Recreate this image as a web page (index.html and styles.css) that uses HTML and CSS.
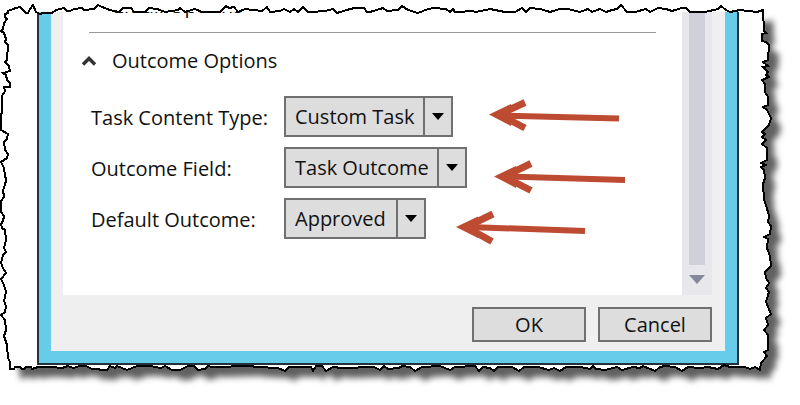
FILE: index.html
```
<!DOCTYPE html>
<html lang="en">
<head>
    <meta charset="UTF-8">
    <meta name="viewport" content="width=device-width, initial-scale=1.0">
    <title>Outcome Options</title>
    <link rel="stylesheet" href="styles.css">
</head>
<body>
    <main class="capture">
        <!-- torn paper and its shadow -->
        <svg class="paper" viewBox="0 0 800 405" preserveAspectRatio="none" aria-hidden="true">
            <defs>
                <path id="torn-edge" d="M8 13 8 11 16 8 20 7 24 11 26 13 28 13 30 9 33 5 36 12 40 14 43 13 52 13 56 10 64 8 67 11 70 11 74 9 82 8 84 10 94 9 98 5 102 7 110 10 119 12 123 8 131 8 134 12 145 12 149 8 157 9 165 12 178 10 180 8 185 12 195 9 202 12 220 12 226 6 229 8 234 7 238 12 245 9 262 11 267 7 270 12 280 11 284 9 290 12 294 9 298 12 303 7 308 12 311 12 325 11 333 9 337 13 350 9 355 8 364 8 367 12 370 12 383 8 387 11 398 10 402 6 408 10 418 13 428 9 434 8 446 9 450 12 453 9 455 12 458 12 472 11 476 12 490 9 505 12 515 12 522 8 526 12 530 8 540 9 550 12 560 9 568 9 580 12 588 9 592 12 600 9 606 12 612 10 617 9 621 5 627 12 635 12 646 9 650 12 658 8 666 9 672 11 682 8 686 8 690 12 705 12 718 9 721 6 726 10 730 12 740 10 757 12 763 10 764 31 766 33 762 34 762 41 766 42 769 45 768 60 763 62 768 66 763 67 768 72 766 75 769 77 762 80 765 84 765 92 768 97 768 105 763 107 767 110 771 118 769 125 762 132 765 134 762 137 766 140 762 144 767 148 767 160 761 163 766 165 761 167 764 170 765 178 763 184 764 200 766 205 769 216 768 222 771 226 770 234 764 237 768 239 767 248 770 256 771 266 765 272 766 278 769 283 766 288 769 292 766 302 771 314 766 318 768 325 764 330 768 335 768 350 764 352 767 356 761 363 760 370 755 367 750 369 745 367 730 367 724 365 718 369 708 367 700 368 688 367 682 371 675 367 665 366 660 367 655 371 643 366 640 368 633 367 622 370 617 367 605 370 596 369 593 366 590 369 581 367 566 367 560 371 554 368 549 370 538 367 524 367 519 371 512 367 498 367 494 371 490 368 483 367 479 371 475 366 455 367 450 370 440 366 422 367 415 371 410 367 402 366 399 368 388 369 384 366 380 370 374 367 342 368 333 367 326 371 322 366 316 366 313 371 311 367 289 367 285 371 278 368 257 367 250 366 212 367 208 366 205 369 198 370 194 366 188 366 180 370 172 370 165 366 161 368 150 366 137 366 127 370 122 368 117 366 115 368 110 366 107 370 92 369 86 366 80 366 73 368 68 366 62 368 52 367 38 367 32 369 31 367 26 367 24 369 22 369 20 367 15 367 14 369 10 369 10 362 8 358 7 345 4 336 6 330 5 320 1 315 5 312 6 306 4 301 6 292 4 285 1 279 6 273 3 268 1 263 3 255 6 252 4 248 6 240 5 230 2 228 1 224 3 221 4 216 1 212 1 201 4 197 3 190 5 185 6 180 5 175 4 168 1 162 7 158 8 154 5 150 4 142 7 139 8 134 1 130 1 115 2 112 2 96 5 91 4 87 10 87 10 83 7 80 6 75 3 73 10 71 9 66 5 62 7 60 8 45 5 42 6 39 4 33 1 31 3 29 4 23 7 19 5 17 5 14Z"/>
            </defs>
            <use href="#torn-edge" class="paper-fill"/>
        </svg>

        <section class="window">
            <div class="pane">
                <div class="content">
                    <h2 class="group-title">Email Options</h2>
                    <hr class="divider">
                    <h2 class="group-title">
                        <button type="button" class="toggle" aria-expanded="true">
                            <svg width="14" height="10" viewBox="0 0 14 10" aria-hidden="true">
                                <path d="M1 8.5 7 2.5 13 8.5" fill="none" stroke="#333" stroke-width="3.500"/>
                            </svg>
                            Outcome Options
                        </button>
                    </h2>

                    <form class="fields" id="outcome-form">
                        <label for="content-type">Task Content Type:</label>
                        <div class="field">
                            <span class="select select-task">
                                <select id="content-type"><option>Custom Task</option></select>
                            </span>
                        </div>

                        <label for="outcome-field">Outcome Field:</label>
                        <div class="field">
                            <span class="select select-outcome">
                                <select id="outcome-field"><option>Task Outcome</option></select>
                            </span>
                        </div>

                        <label for="default-outcome">Default Outcome:</label>
                        <div class="field">
                            <span class="select select-default">
                                <select id="default-outcome"><option>Approved</option></select>
                            </span>
                        </div>
                    </form>

                    <!-- callout arrows drawn over the form -->
                    <svg class="arrows" width="180" height="150" viewBox="450 95 180 150" aria-hidden="true">
                        <g fill="none" stroke="#bd4b32" stroke-width="6">
                            <path d="M502 115.500 619 118.500"/>
                            <path d="M507 176.500 625 180"/>
                            <path d="M469 227 585 231"/>
                        </g>
                        <g fill="none" stroke="#bd4b32" stroke-width="7">
                            <path d="M525 102.500 499 114.500 525 128"/>
                            <path d="M531 163.500 504 176.500 531 190.500"/>
                            <path d="M493 214 466 227 492 241.500"/>
                        </g>
                        <g fill="#bd4b32">
                            <path d="M489 114.500 511 104 511 126Z"/>
                            <path d="M494 176.500 516 166 516 188Z"/>
                            <path d="M456 227 478 216.500 478 238Z"/>
                        </g>
                    </svg>
                </div>
                <div class="scrollbar">
                    <div class="thumb"></div>
                    <svg width="16" height="9" viewBox="0 0 16 9" aria-hidden="true">
                        <path d="M0 0H16L8 9Z" fill="#868999"/>
                    </svg>
                </div>
            </div>
            <div class="actions">
                <button type="submit" class="btn" form="outcome-form">OK</button>
                <button type="button" class="btn">Cancel</button>
            </div>
        </section>

        <svg class="paper paper-front" viewBox="0 0 800 405" preserveAspectRatio="none" aria-hidden="true">
            <use href="#torn-edge" class="paper-line"/>
        </svg>
    </main>
</body>
</html>
```
FILE: styles.css
```
* {
    margin: 0;
    padding: 0;
    box-sizing: border-box;
}

body {
    font-family: "Open Sans", "Noto Sans", sans-serif;
    font-size: 20px;
    line-height: 28px;
    background-color: #fff;
    color: #111;
}

button,
select {
    font: inherit;
    color: inherit;
}

.capture {
    position: relative;
    padding: 12px 61px 40px 37px;
}

.paper {
    position: absolute;
    inset: 0;
    width: 100%;
    height: 100%;
}

.paper-front {
    pointer-events: none;
}

.paper-fill {
    fill: #fff;
    filter: drop-shadow(10px 10px 3px #606060);
}

.paper-line {
    fill: none;
    stroke: #000;
    stroke-width: 2px;
    shape-rendering: crispEdges;
}

.window {
    position: relative;
    border: 2px solid #26323a;
    border-top: 0;
    background-color: #efefef;
    overflow: hidden;
}

.window::before {
    content: "";
    position: absolute;
    inset: 0;
    border: 12px solid #67cbea;
    border-top: 0;
    pointer-events: none;
}

.pane {
    display: flex;
    margin: 0 25px 0 24px;
}

.content {
    position: relative;
    flex: 1;
    padding: 0 26px 56px;
    background-color: #fff;
}

.group-title {
    font-size: 20px;
    font-weight: 400;
}

.group-title:first-child {
    margin-top: -20px;
    padding-left: 24px;
}

.divider {
    margin: 12px 0 14px;
    border: 0;
    border-top: 1px solid #999;
}

.toggle {
    display: flex;
    align-items: center;
    gap: 16px;
    margin-left: -7px;
    border: 0;
    background: none;
}

.fields {
    display: grid;
    grid-template-columns: 193px 1fr;
    row-gap: 10px;
    align-items: center;
    margin-top: 21px;
    padding-left: 2px;
}

.fields label {
    padding-top: 2px;
}

.field {
    display: flex;
}

.select {
    position: relative;
    display: flex;
}

.select select {
    width: 100%;
    height: 41px;
    padding: 0 28px 0 9px;
    border: 2px solid #707070;
    border-radius: 0;
    background: linear-gradient(#707070, #707070) right 26px top / 2px 100% no-repeat #ddd;
    appearance: none;
}

.select::after {
    content: "";
    position: absolute;
    top: 17px;
    right: 9px;
    border: 6px solid transparent;
    border-top: 7px solid #000;
    border-bottom: 0;
    pointer-events: none;
}

.select-task {
    width: 169px;
}

.select-outcome {
    width: 183px;
}

.select-default {
    width: 142px;
}

.arrows {
    position: absolute;
    top: 83px;
    left: 387px;
    pointer-events: none;
}

.scrollbar {
    display: flex;
    flex-direction: column;
    align-items: center;
    gap: 10px;
    width: 30px;
    padding-bottom: 11px;
    background-color: #e8e8ec;
}

.thumb {
    flex: 1;
    width: 16px;
    background-color: #d0d0da;
}

.actions {
    display: flex;
    justify-content: flex-end;
    gap: 12px;
    padding: 12px 25px 21px;
}

.btn {
    width: 114px;
    height: 35px;
    border: 2px solid #707070;
    background-color: #ddd;
}
```
